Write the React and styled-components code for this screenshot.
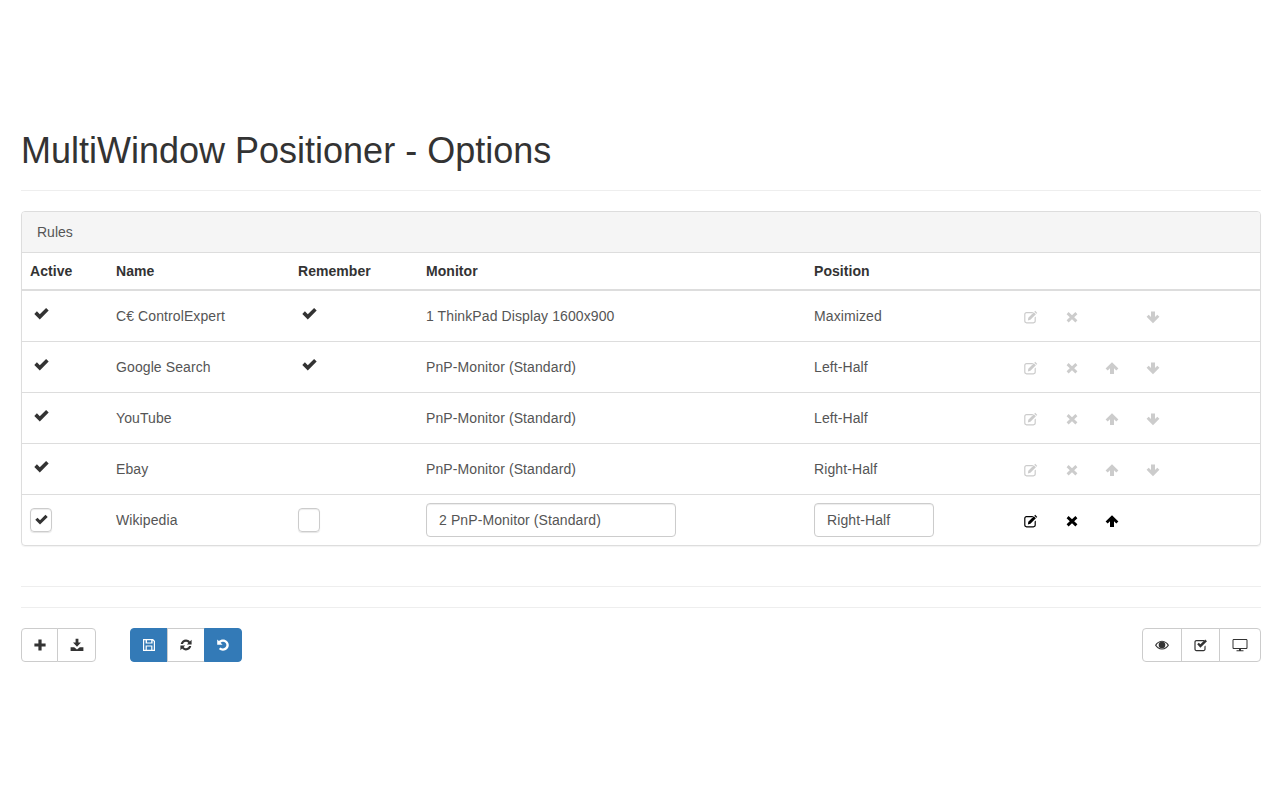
import React from "react";
import styled, { createGlobalStyle } from "styled-components";

const GlobalStyle = createGlobalStyle`
  * { box-sizing: border-box; }
  html, body { margin: 0; padding: 0; background: #fff; }
  body {
    font-family: "Liberation Sans", Arial, sans-serif;
    font-size: 14px;
    line-height: 20px;
    color: #333;
  }
`;

const Page = styled.div`
  width: 1280px;
  padding: 0 19px 0 21px;
`;

const PageHeader = styled.div`
  padding-top: 129px;
  padding-bottom: 17px;
  border-bottom: 1px solid #eee;
  margin-bottom: 20px;
`;

const Title = styled.h1`
  margin: 0;
  font-size: 36px;
  line-height: 44px;
  font-weight: 400;
  color: #333;
`;

const Panel = styled.div`
  border: 1px solid #ddd;
  border-radius: 4px;
  box-shadow: 0 1px 1px rgba(0, 0, 0, 0.05);
  overflow: hidden;
`;

const PanelHeading = styled.div`
  height: 41px;
  padding: 10px 15px;
  background: #f5f5f5;
  border-bottom: 1px solid #ddd;
  color: #555;
`;

const Table = styled.table`
  width: 100%;
  border-collapse: collapse;
  table-layout: fixed;
`;

const HeadCell = styled.th`
  height: 37px;
  padding: 8px;
  text-align: left;
  font-weight: 700;
  color: #333;
  letter-spacing: 0.05px;
  border-bottom: 2px solid #ddd;
`;

const Row = styled.tr`
  & + & td {
    border-top: 1px solid #ddd;
  }
`;

const Cell = styled.td`
  height: 51px;
  padding: 8px;
  color: #555;
  letter-spacing: 0.1px;
  vertical-align: middle;
`;

const CheckMark = styled.span`
  display: block;
  width: 15px;
  margin: -5px 0 0 4px;
  color: #333;
  line-height: 0;
`;

const CheckBox = styled.span`
  display: flex;
  align-items: center;
  justify-content: center;
  width: 22px;
  height: 24px;
  border: 1px solid #ccc;
  border-radius: 4px;
  box-shadow: inset 0 1px 1px rgba(0, 0, 0, 0.075), 0 1px 1px rgba(0, 0, 0, 0.1);
  color: #333;
`;

const TextInput = styled.input`
  display: block;
  flex: none;
  width: ${(p) => p.$width}px;
  height: 34px;
  padding: 6px 12px;
  border: 1px solid #ccc;
  border-radius: 4px;
  box-shadow: inset 0 1px 1px rgba(0, 0, 0, 0.075);
  font: inherit;
  letter-spacing: 0.1px;
  color: #555;
  background: #fff;
  outline: none;
`;

const CellRow = styled.div`
  display: flex;
  align-items: center;
`;

const PositionText = styled.span`
  display: block;
  flex: none;
  width: 120px;
`;

const Actions = styled.div`
  display: grid;
  flex: none;
  grid-template-columns: repeat(4, 40.5px);
  margin-left: 77px;
  align-items: center;
  justify-items: center;
  color: ${(p) => (p.$enabled ? "#000" : "#ccc")};
`;

const ActionIcon = styled.span`
  display: block;
  line-height: 0;
  margin-top: 2px;
`;

const Divider = styled.hr`
  margin: 0;
  border: 0;
  border-top: 1px solid #eee;
`;

const DividerStack = styled.div`
  display: flex;
  flex-direction: column;
  gap: 20px;
  margin: 40px 0 20px;
`;

const Toolbar = styled.div`
  display: flex;
  align-items: flex-start;
`;

const Group = styled.div`
  display: flex;
  margin-right: ${(p) => p.$gap || 0}px;
  margin-left: ${(p) => (p.$right ? "auto" : 0)};
`;

const IconButton = styled.button`
  display: flex;
  align-items: center;
  justify-content: center;
  width: ${(p) => p.$width}px;
  height: 34px;
  padding: 0;
  margin-left: -1px;
  border: 1px solid ${(p) => (p.$primary ? "#337ab7" : "#ccc")};
  background: ${(p) => (p.$primary ? "#337ab7" : "#fff")};
  color: ${(p) => (p.$primary ? "#fff" : "#333")};
  &:first-child {
    margin-left: 0;
    border-radius: 4px 0 0 4px;
  }
  &:last-child {
    border-radius: 0 4px 4px 0;
  }
`;

const Glyph = ({ size = 14, children, view = "0 0 14 14" }) => (
  <svg width={size} height={size} viewBox={view} fill="currentColor" aria-hidden="true">
    {children}
  </svg>
);

const OkIcon = ({ size = 15 }) => (
  <Glyph size={size}>
    <path d="M0.3 7.4 2.7 5 5.4 7.7 11.3 1.8 13.7 4.2 5.4 12.5Z" />
  </Glyph>
);

const EditIcon = () => (
  <Glyph>
    <path d="M2.5 2H9.4L8.2 3.2H2.6C2 3.2 1.4 3.7 1.4 4.4V11C1.4 11.7 2 12.2 2.6 12.2H9.4C10 12.2 10.6 11.7 10.6 11V7.6L11.8 6.4V11.1C11.8 12.4 10.8 13.4 9.5 13.4H2.5C1.2 13.4 .2 12.4 .2 11.1V4.3C.2 3 1.2 2 2.5 2Z" />
    <path d="M11.2 .8 13.3 2.9 12.4 3.8 10.3 1.7ZM9.8 2.2 11.9 4.3 6.4 9.8 3.9 10.4 4.3 7.7Z" />
  </Glyph>
);

const RemoveIcon = () => (
  <Glyph>
    <path d="M3.6 2 7 5.2 10.4 2 12.4 4.2 9.2 7.2 12.4 10.2 10.4 12.4 7 9.2 3.6 12.4 1.6 10.2 4.8 7.2 1.6 4.2Z" />
  </Glyph>
);

const UpIcon = () => (
  <Glyph>
    <path d="M7 1.2 13.4 7.6 11.3 9.6 9 7.3V12.9H5V7.3L2.7 9.6.6 7.6Z" />
  </Glyph>
);

const DownIcon = () => (
  <Glyph>
    <path d="M7 13.2 13.4 6.8 11.3 4.8 9 7.1V1.5H5V7.1L2.7 4.8.6 6.8Z" />
  </Glyph>
);

const PlusIcon = () => (
  <Glyph>
    <path d="M5.4 1.5H8.6V5.5H12.6V8.5H8.6V12.5H5.4V8.5H1.4V5.5H5.4Z" />
  </Glyph>
);

const SaveIcon = () => (
  <Glyph>
    <path d="M5.6 .8H8.4V4.6H11L7 8.8 3 4.6H5.6Z" />
    <path d="M.6 9.2H4.2L7 11.4 9.8 9.2H13.4V13H.6Z" />
  </Glyph>
);

const FloppyIcon = () => (
  <Glyph>
    <path
      fillRule="evenodd"
      d="M1 1H11L13 3V13H1ZM2.2 2.2V11.8H3.6V7.4H10.4V11.8H11.8V3.6L10.6 2.4V5.6H3.6V2.2ZM5 2.2V4.6H9.2V2.2ZM4.8 8.6V11.8H9.2V8.6Z"
    />
  </Glyph>
);

const RefreshIcon = () => (
  <Glyph>
    <path d="M7 1.6C8.6 1.6 10 2.3 10.9 3.4L12.6 1.8V6.6H7.8L9.4 5C8.8 4.2 8 3.8 7 3.8 5.6 3.8 4.4 4.7 4 6H1.7C2.2 3.5 4.4 1.6 7 1.6Z" />
    <path d="M7 12.4C5.4 12.4 4 11.7 3.1 10.6L1.4 12.2V7.4H6.2L4.6 9C5.2 9.8 6 10.2 7 10.2 8.4 10.2 9.6 9.3 10 8H12.3C11.8 10.5 9.6 12.4 7 12.4Z" />
  </Glyph>
);

const UndoIcon = () => (
  <Glyph>
    <path d="M1.2 1.4V6.8H6.6L4.6 4.8C5.2 4.1 6 3.8 7 3.8 8.9 3.8 10.4 5.2 10.4 7.1S8.9 10.4 7 10.4C6 10.4 5.2 10 4.5 9.4L2.9 11.1C4 12.1 5.4 12.8 7 12.8 10.2 12.8 12.8 10.3 12.8 7.1S10.2 1.4 7 1.4C5.3 1.4 3.9 2 2.9 3.1Z" />
  </Glyph>
);

const EyeIcon = () => (
  <Glyph>
    <path
      fillRule="evenodd"
      d="M7 2.8C10.2 2.8 12.8 5 14 7.2 12.8 9.4 10.2 11.6 7 11.6S1.2 9.4 0 7.2C1.2 5 3.8 2.8 7 2.8ZM7 3.8C4.6 3.8 2.5 5.4 1.4 7.2 2.5 9 4.6 10.6 7 10.6S11.5 9 12.6 7.2C11.5 5.4 9.4 3.8 7 3.8Z"
    />
    <circle cx="7" cy="7" r="3.3" />
  </Glyph>
);

const CheckSquareIcon = () => (
  <Glyph>
    <path d="M2.5 2H10V3.2H2.6C2 3.2 1.6 3.6 1.6 4.2V11C1.6 11.6 2 12 2.6 12H9.4C10 12 10.4 11.6 10.4 11V8.6L11.6 7.4V11.1C11.6 12.4 10.7 13.2 9.5 13.2H2.5C1.3 13.2.4 12.4.4 11.1V4.1C.4 2.9 1.3 2 2.5 2Z" />
    <path d="M3.2 6.2 4.8 4.7 6.4 6.3 11.2 1.6 13 3.2 6.4 9.8Z" />
  </Glyph>
);

const MonitorIcon = () => (
  <Glyph size={16} view="0 0 16 16">
    <path
      fillRule="evenodd"
      d="M1.8 2H14.2C14.9 2 15.5 2.6 15.5 3.3V10.7C15.5 11.4 14.9 12 14.2 12H9V13.2H11.5V14.2H4.5V13.2H7V12H1.8C1.1 12 .5 11.4 .5 10.7V3.3C.5 2.6 1.1 2 1.8 2ZM1.9 3C1.7 3 1.5 3.2 1.5 3.4V10.6C1.5 10.8 1.7 11 1.9 11H14.1C14.3 11 14.5 10.8 14.5 10.6V3.4C14.5 3.2 14.3 3 14.1 3Z"
    />
  </Glyph>
);

const rules = [
  { name: "C€ ControlExpert", remember: true, monitor: "1 ThinkPad Display 1600x900", position: "Maximized", up: false, down: true },
  { name: "Google Search", remember: true, monitor: "PnP-Monitor (Standard)", position: "Left-Half", up: true, down: true },
  { name: "YouTube", remember: false, monitor: "PnP-Monitor (Standard)", position: "Left-Half", up: true, down: true },
  { name: "Ebay", remember: false, monitor: "PnP-Monitor (Standard)", position: "Right-Half", up: true, down: true },
];

const RuleActions = ({ enabled, up, down }) => (
  <Actions $enabled={enabled}>
    <ActionIcon><EditIcon /></ActionIcon>
    <ActionIcon><RemoveIcon /></ActionIcon>
    <ActionIcon>{up && <UpIcon />}</ActionIcon>
    <ActionIcon>{down && <DownIcon />}</ActionIcon>
  </Actions>
);

const App = () => {
  return (
    <Page>
      <GlobalStyle />
      <PageHeader>
        <Title>MultiWindow Positioner - Options</Title>
      </PageHeader>

      <Panel>
        <PanelHeading>Rules</PanelHeading>
        <Table>
          <colgroup>
            <col width="86" />
            <col width="182" />
            <col width="128" />
            <col width="388" />
            <col />
          </colgroup>
          <thead>
            <tr>
              <HeadCell>Active</HeadCell>
              <HeadCell>Name</HeadCell>
              <HeadCell>Remember</HeadCell>
              <HeadCell>Monitor</HeadCell>
              <HeadCell>Position</HeadCell>
            </tr>
          </thead>
          <tbody>
            {rules.map((rule) => (
              <Row key={rule.name}>
                <Cell><CheckMark><OkIcon /></CheckMark></Cell>
                <Cell>{rule.name}</Cell>
                <Cell>{rule.remember && <CheckMark><OkIcon /></CheckMark>}</Cell>
                <Cell>{rule.monitor}</Cell>
                <Cell>
                  <CellRow>
                    <PositionText>{rule.position}</PositionText>
                    <RuleActions up={rule.up} down={rule.down} />
                  </CellRow>
                </Cell>
              </Row>
            ))}
            <Row>
              <Cell><CheckBox><OkIcon size={13} /></CheckBox></Cell>
              <Cell>Wikipedia</Cell>
              <Cell><CheckBox /></Cell>
              <Cell><TextInput $width={250} defaultValue="2 PnP-Monitor (Standard)" /></Cell>
              <Cell>
                <CellRow>
                  <TextInput $width={120} defaultValue="Right-Half" />
                  <RuleActions enabled up />
                </CellRow>
              </Cell>
            </Row>
          </tbody>
        </Table>
      </Panel>

      <DividerStack>
        <Divider />
        <Divider />
      </DividerStack>

      <Toolbar>
        <Group $gap={34}>
          <IconButton $width={37}><PlusIcon /></IconButton>
          <IconButton $width={39}><SaveIcon /></IconButton>
        </Group>
        <Group>
          <IconButton $width={38} $primary><FloppyIcon /></IconButton>
          <IconButton $width={38}><RefreshIcon /></IconButton>
          <IconButton $width={38} $primary><UndoIcon /></IconButton>
        </Group>
        <Group $right>
          <IconButton $width={40}><EyeIcon /></IconButton>
          <IconButton $width={39}><CheckSquareIcon /></IconButton>
          <IconButton $width={42}><MonitorIcon /></IconButton>
        </Group>
      </Toolbar>
    </Page>
  );
};

export default App;
